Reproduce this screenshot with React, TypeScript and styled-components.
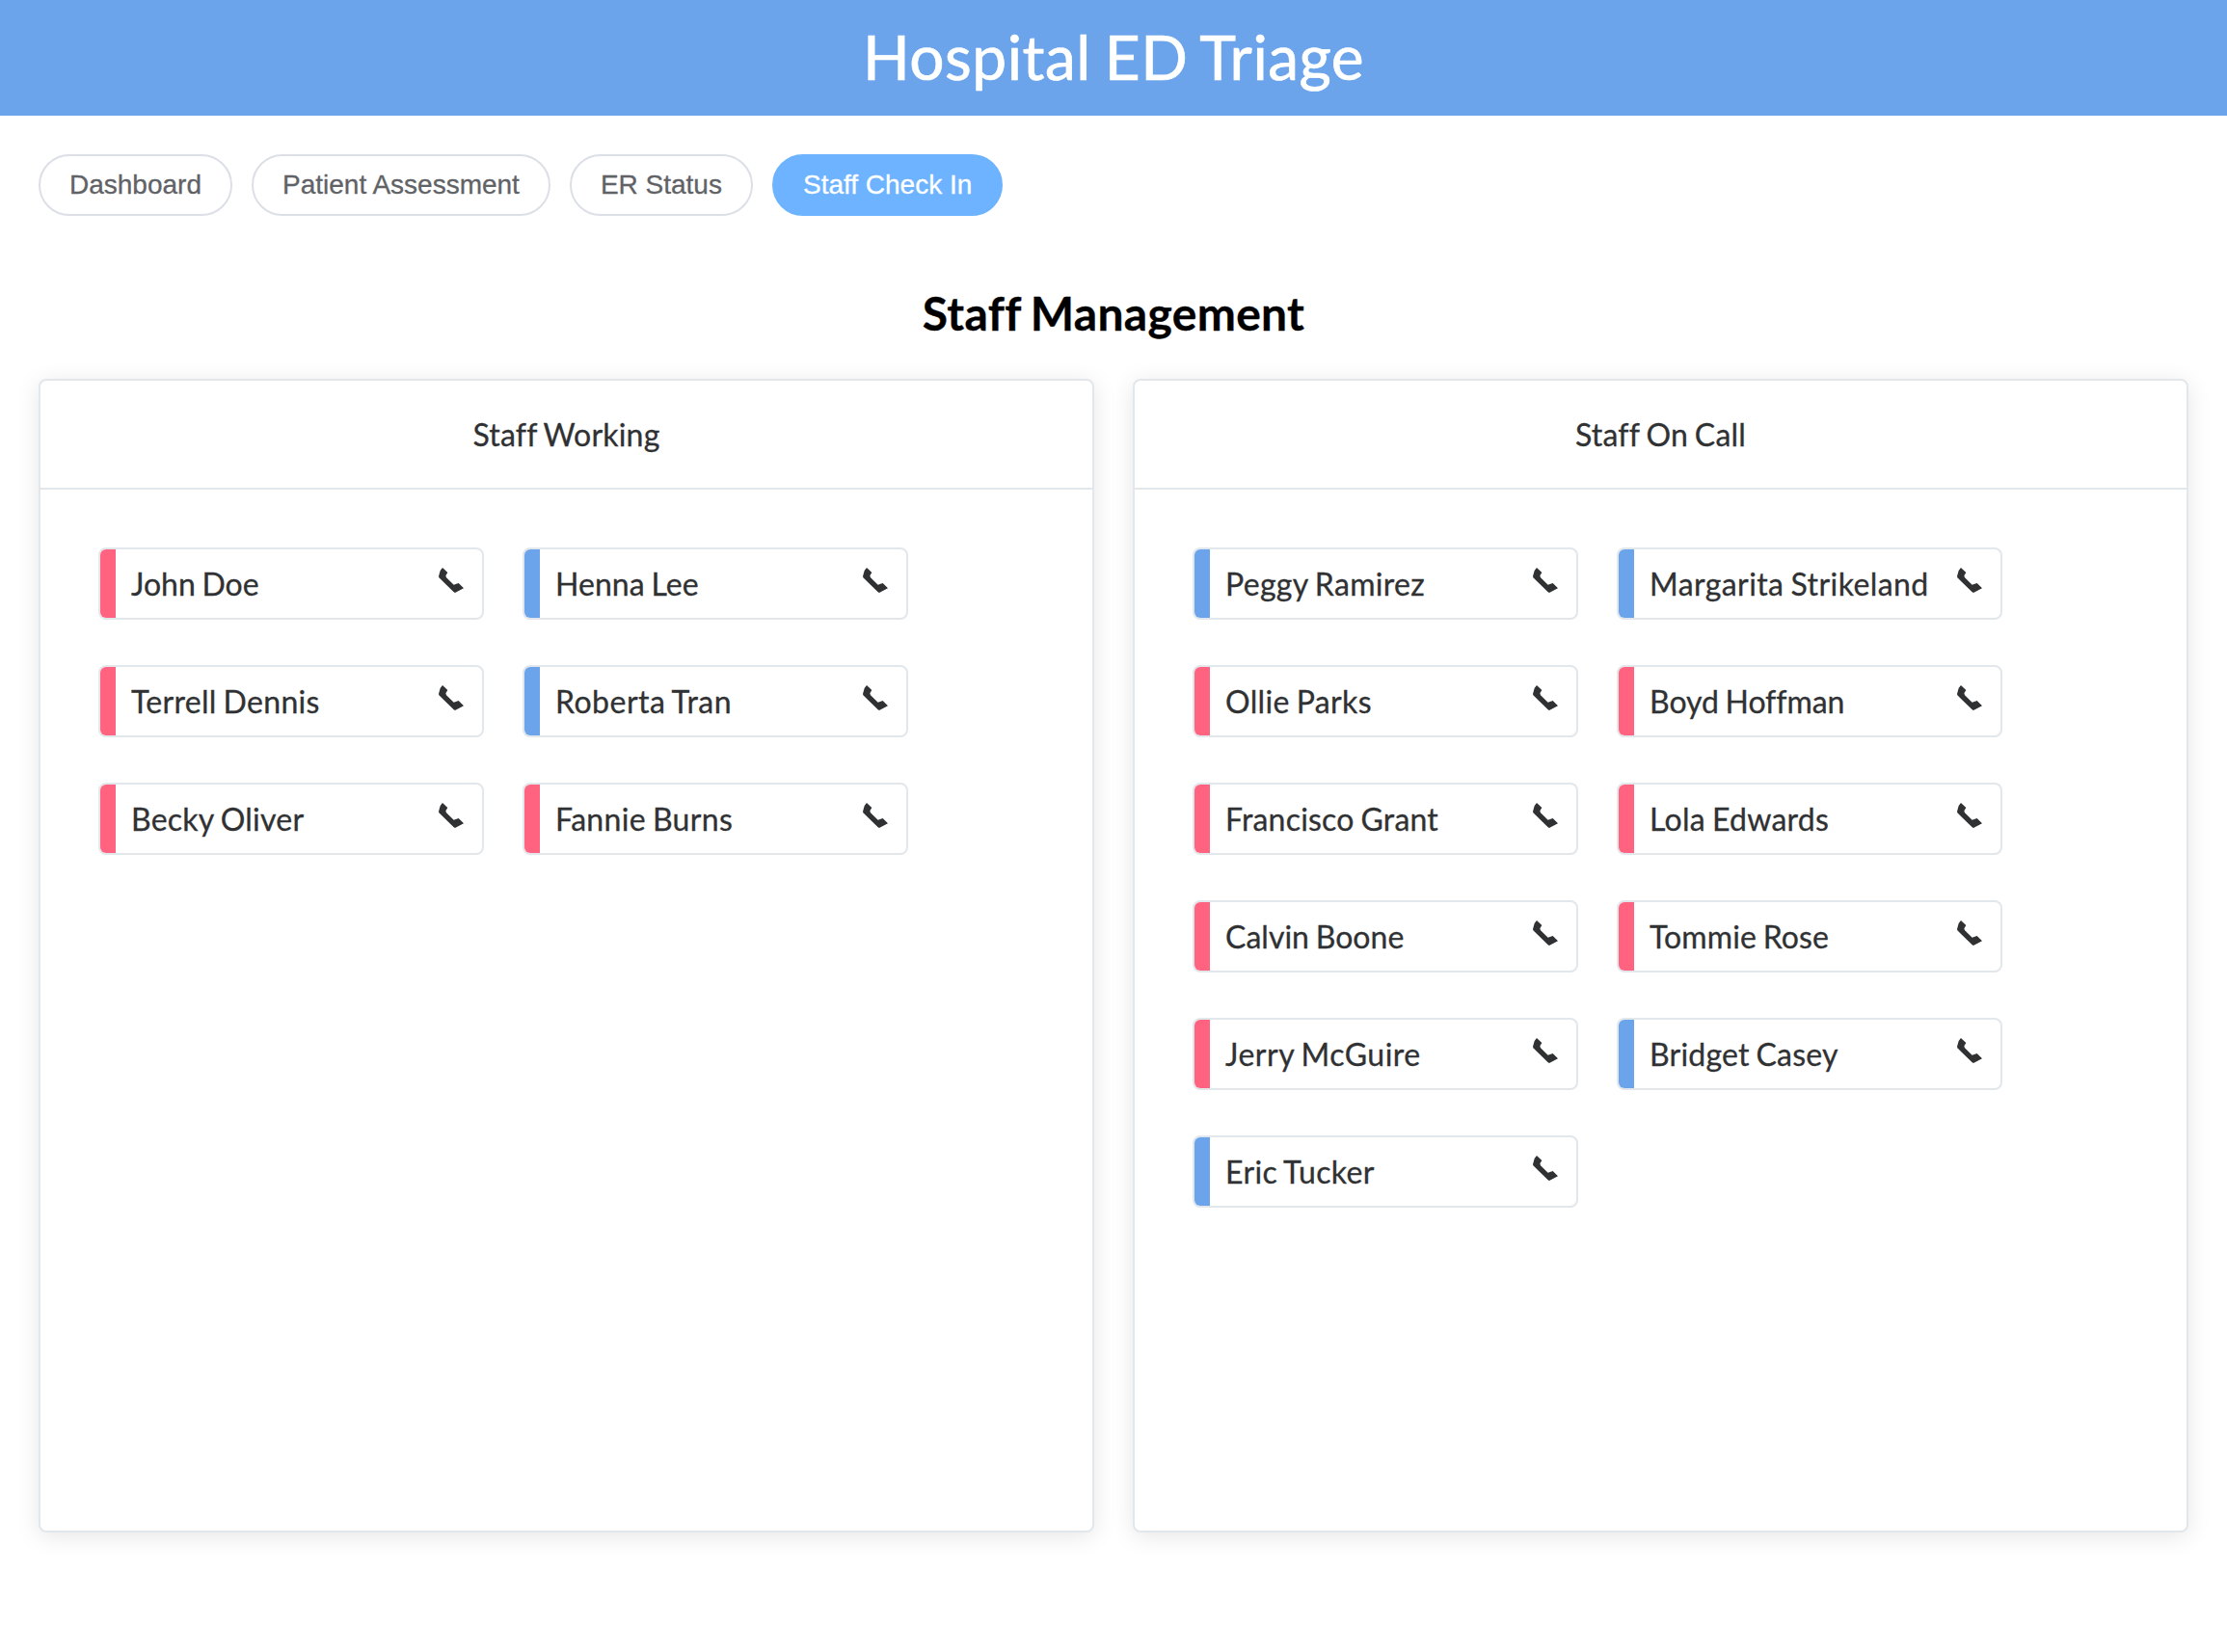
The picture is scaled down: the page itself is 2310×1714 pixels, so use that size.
import React from "react";
import styled, { createGlobalStyle } from "styled-components";

const GlobalStyle = createGlobalStyle`
  *, *::before, *::after { box-sizing: border-box; }
  body {
    margin: 0;
    min-height: 100vh;
    background: #fff;
    font-family: Lato, sans-serif;
    font-variant-ligatures: none;
    color: #303133;
  }
`;

const Page = styled.div`
  min-height: 100vh;
`;

const Header = styled.header`
  height: 120px;
  padding-top: 20px;
  background: #6ca4ec;
  color: #fff;
  font-size: 64px;
  line-height: 78px;
  letter-spacing: 0.5px;
  word-spacing: -3px;
  text-align: center;
  -webkit-text-stroke: 0.7px #fff;
`;

const Nav = styled.nav`
  display: flex;
  gap: 20px;
  padding: 40px 40px 0;
`;

const NavButton = styled.button<{ $active?: boolean }>`
  height: 64px;
  padding: 0 30px;
  border: 2px solid ${(p) => (p.$active ? "#6db3ff" : "#dcdfe6")};
  border-radius: 32px;
  background: ${(p) => (p.$active ? "#6db3ff" : "#fff")};
  color: ${(p) => (p.$active ? "#fff" : "#606266")};
  font: 28px/28px "Liberation Sans", Arial, sans-serif;
  white-space: nowrap;
  -webkit-text-stroke: 0.3px currentColor;
`;

const Title = styled.h2`
  margin: 72px 0 0;
  height: 97px;
  line-height: 58px;
  font-size: 48px;
  font-weight: 700;
  letter-spacing: 0.3px;
  word-spacing: -2px;
  text-align: center;
  color: #000;
  -webkit-text-stroke: 0.3px #000;
`;

const Columns = styled.main`
  display: grid;
  grid-template-columns: 1fr 1fr;
  gap: 40px;
  padding: 0 40px;
`;

const Panel = styled.section`
  height: 1197px;
  border: 2px solid #e2e7ec;
  border-radius: 8px;
  background: #fff;
  box-shadow: 0 4px 24px rgba(0, 0, 0, 0.1);
`;

const PanelHeader = styled.div`
  height: 113px;
  padding: 36px 40px;
  border-bottom: 2px solid #e2e7ec;
  font-size: 32px;
  line-height: 39px;
  letter-spacing: 0.2px;
  word-spacing: -1.5px;
  text-align: center;
  -webkit-text-stroke: 0.3px currentColor;
`;

const StaffGrid = styled.div`
  display: grid;
  grid-template-columns: 400px 400px;
  gap: 47px 40px;
  padding: 60px;
`;

const StaffCard = styled.div`
  display: flex;
  align-items: stretch;
  height: 75px;
  border: 2px solid #e2e7ec;
  border-radius: 8px;
  overflow: hidden;
`;

const RoleBar = styled.span<{ $role: Role }>`
  width: 16px;
  background: ${(p) => (p.$role === "nurse" ? "#ff6380" : "#6ca4ec")};
`;

const Name = styled.span<{ $tracking: number }>`
  flex: 1;
  padding: 16px 0 0 16px;
  font-size: 32px;
  line-height: 39px;
  letter-spacing: ${(p) => p.$tracking}px;
  word-spacing: -1.5px;
  white-space: nowrap;
  -webkit-text-stroke: 0.3px currentColor;
`;

const PhoneIcon = styled.svg`
  flex: none;
  width: 26px;
  height: 26px;
  margin: 19px 19px 0 0;
  fill: #303133;
`;

type Role = "nurse" | "doctor";
type Staff = [name: string, role: Role, tracking: number];

const working: Staff[] = [
  ["John Doe", "nurse", 0],
  ["Henna Lee", "doctor", 0.05],
  ["Terrell Dennis", "nurse", 0.3],
  ["Roberta Tran", "doctor", 0.48],
  ["Becky Oliver", "nurse", 0.24],
  ["Fannie Burns", "nurse", 0.32],
];

const onCall: Staff[] = [
  ["Peggy Ramirez", "doctor", 0.32],
  ["Margarita Strikeland", "doctor", 0.42],
  ["Ollie Parks", "nurse", 0.35],
  ["Boyd Hoffman", "nurse", -0.05],
  ["Francisco Grant", "nurse", 0.2],
  ["Lola Edwards", "nurse", 0.27],
  ["Calvin Boone", "nurse", 0.02],
  ["Tommie Rose", "nurse", 0.1],
  ["Jerry McGuire", "nurse", 0.5],
  ["Bridget Casey", "doctor", 0.2],
  ["Eric Tucker", "doctor", 0.35],
];

function StaffPanel({ title, staff }: { title: string; staff: Staff[] }) {
  return (
    <Panel>
      <PanelHeader>{title}</PanelHeader>
      <StaffGrid>
        {staff.map(([name, role, tracking]) => (
          <StaffCard key={name}>
            <RoleBar $role={role} />
            <Name $tracking={tracking}>{name}</Name>
            <PhoneIcon viewBox="0 0 78 78">
              <path d="M12 0L28 15L22 25L24 31L47 53L62 48L78 64L51 78L47 76L1 31L0 27L5 9Z" />
            </PhoneIcon>
          </StaffCard>
        ))}
      </StaffGrid>
    </Panel>
  );
}

const tabs = ["Dashboard", "Patient Assessment", "ER Status", "Staff Check In"];

export default function App() {
  return (
    <Page>
      <GlobalStyle />
      <Header>Hospital ED Triage</Header>
      <Nav>
        {tabs.map((tab) => (
          <NavButton key={tab} $active={tab === "Staff Check In"}>
            {tab}
          </NavButton>
        ))}
      </Nav>
      <Title>Staff Management</Title>
      <Columns>
        <StaffPanel title="Staff Working" staff={working} />
        <StaffPanel title="Staff On Call" staff={onCall} />
      </Columns>
    </Page>
  );
}
